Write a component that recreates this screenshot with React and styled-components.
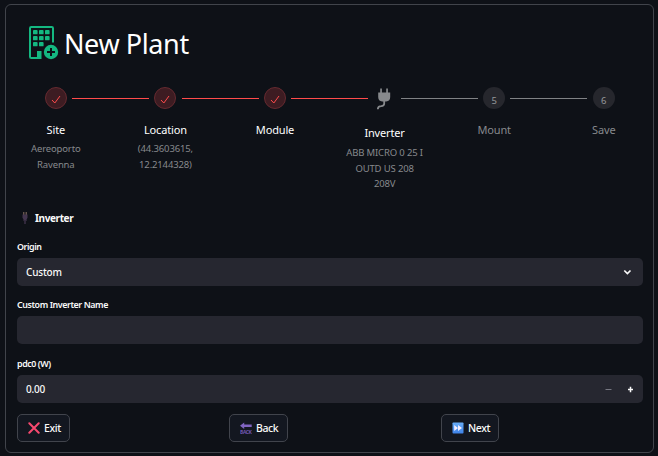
import React from "react";
import styled, { createGlobalStyle } from "styled-components";

const GlobalStyle = createGlobalStyle`
  * { box-sizing: border-box; }
  body {
    margin: 0;
    background: #0e1117;
    color: #fafafa;
    font-family: "Noto Sans", "Open Sans", sans-serif;
  }
  button, input { font: inherit; color: inherit; }
`;

const Page = styled.main`
  height: 456px;
  padding: 4px 4px 3px 5px;
  overflow: hidden;
`;

const Card = styled.section`
  height: 449px;
  border: 1px solid #41444b;
  border-radius: 6px;
  padding: 0 10px 0 11px;
`;

const Header = styled.header`
  display: flex;
  align-items: flex-start;
  height: 82px;
  padding: 20px 0 0 11px;
  gap: 5px;
  svg { flex: none; }
`;

const Title = styled.h1`
  margin: 1px 0 0;
  color: #fff;
  font-size: 27px;
  font-weight: 400;
  line-height: 36px;
  letter-spacing: -0.4px;
  white-space: nowrap;
`;

const Stepper = styled.ol`
  display: grid;
  grid-template-columns: repeat(6, 109.6px);
  margin: 0 -16px;
  padding: 0;
  height: 123px;
  list-style: none;
`;

const StepItem = styled.li`
  display: flex;
  flex-direction: column;
  align-items: center;
  text-align: center;
`;

const Track = styled.div`
  display: flex;
  align-items: center;
  justify-content: space-between;
  width: 100%;
  height: ${(p) => (p.$active ? 25 : 22)}px;
  padding-bottom: ${(p) => (p.$active ? 3 : 0)}px;
`;

const Line = styled.span`
  width: 38.5px;
  height: 1px;
  margin-top: 1px;
  background: ${(p) => p.$color};
`;

const Marker = styled.span`
  display: flex;
  align-items: center;
  justify-content: center;
  width: 22px;
  height: 22px;
  border-radius: 50%;
  padding-top: ${(p) => (p.$plain ? 1 : p.$done ? 3 : 5)}px;
  font-size: 9.5px;
  line-height: 12px;
  color: #95979b;
  background: ${(p) => (p.$done ? "#3d1c22" : p.$plain ? "transparent" : "#26272d")};
  border: 1px solid ${(p) => (p.$done ? "#662a30" : "transparent")};
  svg { flex: none; }
`;

const StepLabel = styled.span`
  margin-top: 13px;
  font-size: 11px;
  line-height: 16px;
  letter-spacing: -0.15px;
  color: ${(p) => (p.$muted ? "#87898d" : "#fff")};
`;

const StepNote = styled.span`
  margin-top: ${(p) => (p.$active ? 4 : 3)}px;
  font-size: 9.5px;
  line-height: 15.6px;
  letter-spacing: -0.15px;
  color: #87898d;
  white-space: pre-line;
`;

const SectionTitle = styled.h2`
  display: flex;
  align-items: center;
  gap: 6px;
  height: 16px;
  margin: 0 0 13px;
  padding-left: 4px;
  font-size: 10px;
  font-weight: 700;
  letter-spacing: -0.38px;
`;

const Field = styled.div`
  display: flex;
  flex-direction: column;
  margin-bottom: ${(p) => p.$gap}px;
`;

const FieldLabel = styled.label`
  height: 19px;
  font-size: 8.9px;
  font-weight: 600;
  line-height: 15px;
  letter-spacing: -0.42px;
`;

const Control = styled.div`
  display: flex;
  align-items: center;
  height: 28px;
  padding: 0 9px;
  border-radius: 5px;
  background: #262730;
  font-size: 10px;
  font-weight: 500;
  svg { flex: none; }
`;

const Value = styled.span`
  flex: 1;
  letter-spacing: -0.2px;
`;

const StepButtons = styled.div`
  display: flex;
  align-items: center;
  gap: 16px;
`;

const Actions = styled.footer`
  display: grid;
  grid-template-columns: repeat(3, 202px);
  gap: 10px;
`;

const ActionButton = styled.button`
  display: flex;
  align-items: center;
  width: ${(p) => p.$width}px;
  height: 28px;
  gap: 4px;
  padding: 0 0 1px 10px;
  border: 1px solid #41444c;
  border-radius: 5px;
  background: #131720;
  font-size: 10.5px;
  font-weight: 500;
  letter-spacing: -0.4px;
  svg { flex: none; }
`;

const RED = "#ff4b4b";
const GREY = "#808285";

const PlantIcon = () => (
  <svg width="31" height="35" viewBox="28 25 31 35">
    <path d="M53 42.5V28.2a1.2 1.2 0 0 0-1.2-1.2H31.2a1.2 1.2 0 0 0-1.2 1.2v28.6a1.2 1.2 0 0 0 1.2 1.2H41" fill="none" stroke="#14b881" strokeWidth="2" />
    <path d="M37 51h4.5v8H37z" fill="#14b881" />
    <g fill="#14b881">
      {[[33, 30], [39, 30], [45, 30], [33, 36], [39, 36], [45, 36], [33, 42], [39, 42]].map(([x, y]) => (
        <rect key={`${x}-${y}`} x={x} y={y} width="4.6" height="4.3" rx="0.9" />
      ))}
      <circle cx="51" cy="52" r="7.2" />
    </g>
    <path d="M51 48v8M47 52h8" stroke="#0e1117" strokeWidth="2" />
  </svg>
);

const CheckIcon = () => (
  <svg width="10" height="9" viewBox="0 0 10 9">
    <path d="M1 5l2.8 3L9 1" fill="none" stroke="#ff4b4b" strokeWidth="1" />
  </svg>
);

const PlugIcon = () => (
  <svg width="16" height="22" viewBox="376.8 87.5 16 22">
    <path d="M380 88h1.7v4.5H380zM386 88h1.7v4.5H386zM378 92h12v4.6q0 4.2-4 4.4h-4q-4-.2-4-4.4z" fill="#87898c" />
    <path d="M384 100.5v2.7q0 2.2-3 2.4-3.4 0-3.4 3.2" fill="none" stroke="#87898c" strokeWidth="1.8" />
  </svg>
);

const CableIcon = () => (
  <svg width="8" height="12" viewBox="0 0 8 12">
    <path d="M2.8 0v3M5.2 0v3" stroke="#8d7466" strokeWidth="1" />
    <path d="M1.5 2.5h5v3.2L5.6 7.5V9H2.5V7.5L1.5 5.7z" fill="#44364f" />
    <path d="M4 8v4" stroke="#352c40" strokeWidth="1.8" />
  </svg>
);

const ChevronIcon = () => (
  <svg width="11" height="7" viewBox="0 0 11 7">
    <path d="M1.3 1.5l3.1 3 3.1-3" fill="none" stroke="#fafafa" strokeWidth="1.7" />
  </svg>
);

const MinusIcon = () => (
  <svg width="7" height="7" viewBox="0 0 7 7">
    <path d="M.5 3.5h6" stroke="#777882" />
  </svg>
);

const PlusIcon = () => (
  <svg width="6" height="7" viewBox="0 0 6 7">
    <path d="M0 3.5h5M2.5 .7v5.6" stroke="#fafafa" strokeWidth="1.5" />
  </svg>
);

const CrossIcon = () => (
  <svg width="12" height="12" viewBox="0 0 12 12">
    <path d="M1.3 1.3l9.4 9.4M10.7 1.3L1.3 10.7" stroke="#f8496f" strokeWidth="2" strokeLinecap="round" />
  </svg>
);

const BackIcon = () => (
  <svg width="12" height="12" viewBox="0 0 12 12">
    <path d="M0 3.7L4.2.4v2.1h7.5v2.6H4.2V7z" fill="#8064c0" />
    <text x="0" y="11.7" fontSize="4.6" fontWeight="700" textLength="11.5" lengthAdjust="spacingAndGlyphs" fill="#6e55ad">BACK</text>
  </svg>
);

const ForwardIcon = () => (
  <svg width="12" height="12" viewBox="0 0 12 12">
    <defs>
      <linearGradient id="forward-fill" x2="0" y2="1">
        <stop stopColor="#69aef8" />
        <stop offset="1" stopColor="#3e82e8" />
      </linearGradient>
    </defs>
    <rect x=".5" y=".5" width="11" height="11" rx=".8" fill="url(#forward-fill)" />
    <path d="M2.2 3l3.8 3-3.8 3zM6 3l4 3-4 3z" fill="#f5efff" />
  </svg>
);

const steps = [
  { label: "Site", note: "Aereoporto\nRavenna", state: "done" },
  { label: "Location", note: "(44.3603615,\n12.2144328)", state: "done" },
  { label: "Module", state: "done" },
  { label: "Inverter", note: "ABB MICRO 0 25 I\nOUTD US 208\n208V", state: "active" },
  { label: "Mount", state: "todo" },
  { label: "Save", state: "todo" },
];

function Step({ step, index }) {
  const { label, note, state } = step;
  const active = state === "active";
  const before = index === 0 ? "transparent" : state === "todo" ? GREY : RED;
  const after = index === steps.length - 1 ? "transparent" : state === "done" ? RED : GREY;
  return (
    <StepItem>
      <Track $active={active}>
        <Line $color={before} />
        <Marker $done={state === "done"} $plain={active}>
          {state === "done" ? <CheckIcon /> : active ? <PlugIcon /> : index + 1}
        </Marker>
        <Line $color={after} />
      </Track>
      <StepLabel $muted={state === "todo"}>{label}</StepLabel>
      {note && <StepNote $active={active}>{note}</StepNote>}
    </StepItem>
  );
}

export default function App() {
  return (
    <>
      <GlobalStyle />
      <Page>
        <Card>
          <Header>
            <PlantIcon />
            <Title>New Plant</Title>
          </Header>
          <Stepper>
            {steps.map((step, i) => (
              <Step key={step.label} step={step} index={i} />
            ))}
          </Stepper>
          <SectionTitle>
            <CableIcon />
            Inverter
          </SectionTitle>
          <Field $gap={11}>
            <FieldLabel>Origin</FieldLabel>
            <Control>
              <Value>Custom</Value>
              <ChevronIcon />
            </Control>
          </Field>
          <Field $gap={12}>
            <FieldLabel>Custom Inverter Name</FieldLabel>
            <Control />
          </Field>
          <Field $gap={11}>
            <FieldLabel>pdc0 (W)</FieldLabel>
            <Control>
              <Value>0.00</Value>
              <StepButtons>
                <MinusIcon />
                <PlusIcon />
              </StepButtons>
            </Control>
          </Field>
          <Actions>
            <ActionButton $width={53}>
              <CrossIcon />
              Exit
            </ActionButton>
            <ActionButton $width={59}>
              <BackIcon />
              Back
            </ActionButton>
            <ActionButton $width={58}>
              <ForwardIcon />
              Next
            </ActionButton>
          </Actions>
        </Card>
      </Page>
    </>
  );
}
